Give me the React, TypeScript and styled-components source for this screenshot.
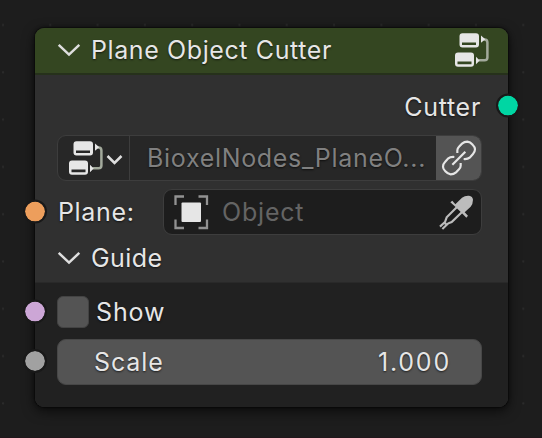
import React from "react";
import styled, { createGlobalStyle } from "styled-components";

const GlobalStyle = createGlobalStyle`
  * { box-sizing: border-box; }
  body { margin: 0; background: #1d1d1d; overflow: hidden; }
`;

const Canvas = styled.main`
  width: 542px;
  height: 438px;
  padding: 28px 34px 30px 35px;
  border-bottom: 1px solid #21171b;
  background-color: #1d1d1d;
  background-image: radial-gradient(circle at 3px 25px, #2b2b2b 0.7px, transparent 1.5px);
  background-size: 47.3px 47.3px;
  font-family: Inter, "Liberation Sans", sans-serif;
  font-size: 25px;
  line-height: 30px;
  color: #e6e6e6;
  text-shadow: 0 1px 2px rgba(0, 0, 0, 0.65);
`;

const Node = styled.section`
  width: 473px;
  height: 379px;
  display: flex;
  flex-direction: column;
  border-radius: 9px;
  background: #303030;
  box-shadow: 0 0 0 1px rgba(0, 0, 0, 0.25), 0 0 3px 1px rgba(0, 0, 0, 0.35),
    0 4px 12px 1px rgba(0, 0, 0, 0.55);
`;

const Header = styled.header`
  height: 47px;
  padding: 0 18px 0 22px;
  display: flex;
  align-items: center;
  border-radius: 9px 9px 0 0;
  border-bottom: 2px solid #26311b;
  background: #344621;
`;

const Label = styled.span<{ $spacing?: number }>`
  letter-spacing: ${(p) => p.$spacing ?? 0.65}px;
  white-space: pre;
`;

const SectionTitle = styled(Label)`
  flex: 1;
  margin-left: 11px;
  margin-bottom: 2px;
`;

const OutputName = styled(Label)`
  padding: 2px 1px 0 0;
`;

const Row = styled.div<{ $height: number; $top?: number; $end?: boolean }>`
  position: relative;
  height: ${(p) => p.$height}px;
  margin-top: ${(p) => p.$top ?? 0}px;
  padding: 0 26px 0 22px;
  display: flex;
  align-items: center;
  justify-content: ${(p) => (p.$end ? "flex-end" : "flex-start")};
`;

const Socket = styled.i<{ $color: string; $side: "left" | "right"; $lift?: number }>`
  position: absolute;
  ${(p) => p.$side}: -12px;
  top: calc(50% - 12px);
  width: 24px;
  height: 24px;
  border: 2px solid #191919;
  border-radius: 50%;
  background: ${(p) => p.$color};
  background-clip: padding-box;
  transform: translateY(-${(p) => p.$lift ?? 0.4}px);
`;

const Field = styled.div<{ $fill: string }>`
  flex: 1;
  height: 46px;
  display: flex;
  align-items: center;
  overflow: hidden;
  border: 1px solid #3d3d3d;
  border-radius: 9px;
  background: ${(p) => p.$fill};
`;

const TypePicker = styled.div`
  width: 72px;
  height: 100%;
  padding: 1px 0 0 11px;
  display: flex;
  align-items: center;
  gap: 2px;
  border-right: 1px solid #3d3d3d;
`;

const NameText = styled(Label)`
  flex: 1;
  min-width: 0;
  padding-left: 17px;
  color: #808080;
`;

const LinkButton = styled.div`
  flex: none;
  width: 45px;
  height: 100%;
  display: grid;
  place-items: center;
  background: #545454;
`;

const ObjectField = styled(Field)`
  padding: 0 7px 0 10px;
`;

const Placeholder = styled(Label)`
  flex: 1;
  margin-left: 14px;
  color: #646464;
  text-shadow: none;
`;

const PropertyName = styled(Label)`
  width: 106px;
  padding-left: 1px;
`;

const Panel = styled.div`
  flex: 1;
  padding-top: 13px;
  border-top: 1px solid #292929;
  border-radius: 0 0 9px 9px;
  background: #212121;
`;

const Checkbox = styled.div`
  width: 32px;
  height: 32px;
  margin-right: 7px;
  border: 1px solid #434343;
  border-radius: 6px;
  background: #545454;
`;

const Slider = styled(Field)`
  justify-content: space-between;
  padding: 0 30px 0 36px;
  border-color: #474747;
`;

const Icon = styled.svg`
  display: block;
  flex: none;
  overflow: visible;
`;

const GroupIcon = () => (
  <Icon width="35" height="35" viewBox="0 0 35 35" fill="#e6e6e6">
    <path d="M28.5 6.4h1q2.9 0 2.9 3v15.1q0 2.8-2.9 2.8H23.5" fill="none" stroke="#a3aa9c" strokeWidth="2.5" />
    <path fillRule="evenodd" d="M7.5 0.2h13.5q3 0 3 3v8.3q0 3-3 3H7.5q-3 0-3-3V3.2q0-3 3-3ZM7 9.4v2.6h14v-2.6Z" />
    <path fillRule="evenodd" d="M3 19.5h13q3 0 3 3v8.3q0 3-3 3H3q-3 0-3-3v-8.3q0-3 3-3ZM2.5 28.6v2.6h14v-2.6Z" />
    <path d="M26 2.5 30.3 6.2 26 9.7ZM21 23.8v7.4l3.7-3.7Z" />
  </Icon>
);

const Chevron = ({ small = false }: { small?: boolean }) => (
  <Icon width={small ? 17 : 23} height="15" viewBox={small ? "0 0 17 15" : "0 0 23 15"}>
    <path
      d={small ? "M1.5 5 8.5 12 15.5 5" : "M1.7 1.9 12 11.6 22.3 1.9"}
      fill="none"
      stroke="#dedede"
      strokeWidth="2.5"
    />
  </Icon>
);

const ObjectIcon = () => (
  <Icon width="34" height="34" viewBox="0 0 34 34">
    <path
      d="M1.5 10V1.5h8.5M24.5 1.5H33v8.5M33 24.5V33h-8.5M10 33H1.5v-8.5"
      fill="none"
      stroke="#929292"
      strokeWidth="2.3"
    />
    <rect x="7.5" y="7.5" width="19.5" height="19.5" rx="1" fill="#e6e6e6" />
  </Icon>
);

const LinkIcon = () => (
  <Icon width="36" height="36" viewBox="184 45 108 108" fill="none" stroke="#e6e6e6" strokeWidth="6.5">
    <path d="M233 84V76Q233 70 238 65L247 56Q254 50 263 50Q272 51 279 59Q286 66 286 73Q286 81 280 87L270 98Q264 103 252 102" />
    <path d="M243 114V122Q243 128 238 133L229 142Q222 148 213 148Q204 147 197 139Q190 132 190 125Q190 117 196 111L206 100Q212 95 224 96" />
    <path d="M218 119 257 80" />
  </Icon>
);

const Eyedropper = () => (
  <Icon width="35" height="35" viewBox="177 207 105 105">
    <path
      d="M226 235 246 215Q255 208 267 209Q278 210 279 221Q279 233 272 242L254 259 264 269 259 275 243 259 226 242 211 229 217 224Z"
      fill="#bcbcbc"
    />
    <path
      d="M231 243 200 274 195 288 180 302M247 257 215 288 205 292 187 309M193 291 199 294"
      fill="none"
      stroke="#bcbcbc"
      strokeWidth="6.5"
    />
  </Icon>
);

export default function App() {
  return (
    <>
      <GlobalStyle />
      <Canvas>
        <Node>
          <Header>
            <Chevron />
            <SectionTitle $spacing={0.6}>Plane Object Cutter</SectionTitle>
            <GroupIcon />
          </Header>
          <Row $height={50} $top={6} $end>
            <OutputName $spacing={0.7}>Cutter</OutputName>
            <Socket $side="right" $color="#00d6a3" />
          </Row>
          <Row $height={46} $top={4}>
            <Field $fill="#272727">
              <TypePicker>
                <GroupIcon />
                <Chevron small />
              </TypePicker>
              <NameText $spacing={0.68}>BioxelNodes_PlaneO...</NameText>
              <LinkButton>
                <LinkIcon />
              </LinkButton>
            </Field>
          </Row>
          <Row $height={46} $top={8}>
            <Socket $side="left" $color="#ed9e5c" />
            <PropertyName>Plane:</PropertyName>
            <ObjectField $fill="#1d1d1d">
              <ObjectIcon />
              <Placeholder $spacing={0.8}>Object</Placeholder>
              <Eyedropper />
            </ObjectField>
          </Row>
          <Row $height={47}>
            <Chevron />
            <SectionTitle $spacing={0.4}>Guide</SectionTitle>
          </Row>
          <Panel>
            <Row $height={32}>
              <Socket $side="left" $color="#cca6d6" />
              <Checkbox />
              <Label $spacing={0.9}>Show</Label>
            </Row>
            <Row $height={46} $top={11}>
              <Socket $side="left" $color="#a1a1a1" $lift={1} />
              <Slider $fill="#545454">
                <Label $spacing={0.9}>Scale</Label>
                <Label $spacing={1.8}>1.000</Label>
              </Slider>
            </Row>
          </Panel>
        </Node>
      </Canvas>
    </>
  );
}
